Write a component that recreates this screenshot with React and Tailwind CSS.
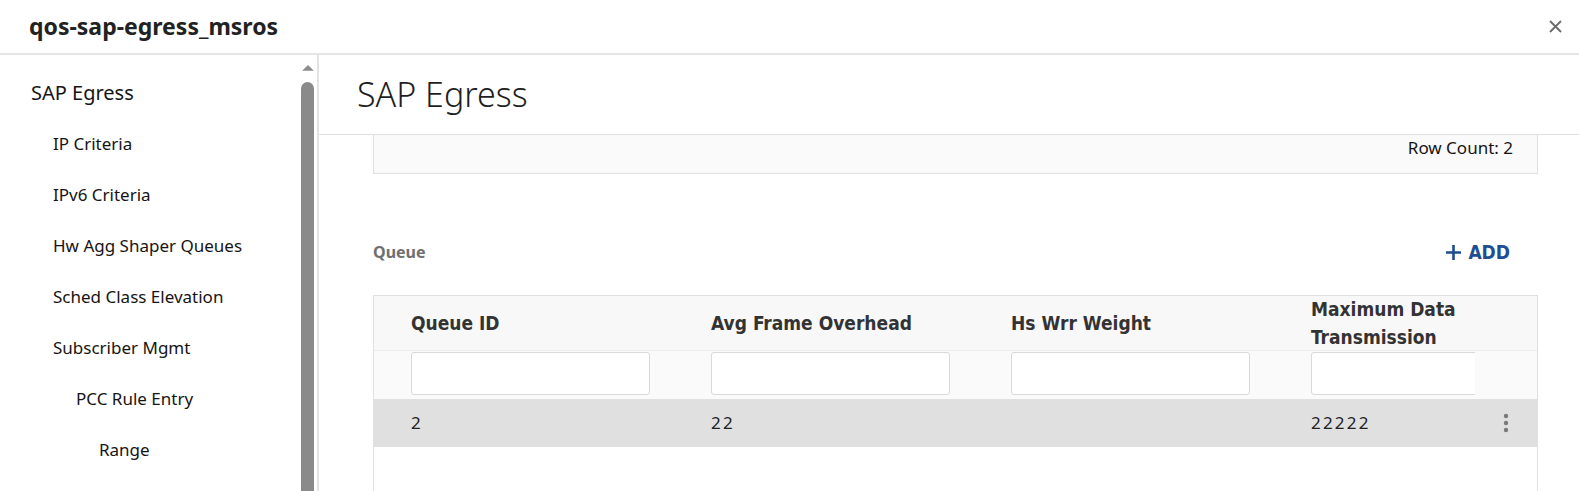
import React from 'react';

const NAV = [
  { label: 'IP Criteria', indent: 'pl-[53px]' },
  { label: 'IPv6 Criteria', indent: 'pl-[53px]' },
  { label: 'Hw Agg Shaper Queues', indent: 'pl-[53px]' },
  { label: 'Sched Class Elevation', indent: 'pl-[53px]' },
  { label: 'Subscriber Mgmt', indent: 'pl-[53px]' },
  { label: 'PCC Rule Entry', indent: 'pl-[76px]' },
  { label: 'Range', indent: 'pl-[99px]' },
];

const COLUMNS = ['Queue ID', 'Avg Frame Overhead', 'Hs Wrr Weight', 'Maximum Data Transmission'];
const ROW = ['2', '22', '', '22222'];

function Kebab() {
  return (
    <svg width="6" height="20" viewBox="0 0 6 20">
      <circle cx="3" cy="3" r="2.2" fill="#7a7a7a" />
      <circle cx="3" cy="10" r="2.2" fill="#7a7a7a" />
      <circle cx="3" cy="17" r="2.2" fill="#7a7a7a" />
    </svg>
  );
}

export default function App() {
  const sans = { fontFamily: '"Noto Sans", "Open Sans", sans-serif' };
  const narrow = { fontFamily: '"Liberation Sans Narrow", "DejaVu Sans Condensed", sans-serif' };

  return (
    <div className="h-[491px] w-full overflow-hidden bg-white text-[#161513]" style={sans}>
      <div className="flex h-[55px] items-center justify-between border-b-2 border-[#e5e5e5] pl-[29px] pr-[17px]">
        <h1 className="text-[23px] font-bold text-[#222]">qos-sap-egress_msros</h1>
        <svg width="13" height="13" viewBox="0 0 13 13">
          <path d="M1 1L12 12M12 1L1 12" stroke="#6b6b6b" strokeWidth="1.8" />
        </svg>
      </div>

      <div className="flex h-[436px]">
        <nav className="w-[296px] shrink-0 pt-[24px]">
          <div className="flex h-[28px] items-center pl-[31px] text-[20px]">SAP Egress</div>
          <ul className="mt-[23px] flex flex-col gap-[23px]">
            {NAV.map((item) => (
              <li key={item.label} className={`flex h-[28px] items-center text-[17px] ${item.indent}`}>
                {item.label}
              </li>
            ))}
          </ul>
        </nav>

        <div className="flex w-[23px] shrink-0 flex-col items-start border-r-2 border-[#e3e3e3] pl-[5px] pt-[9px]">
          <svg width="14" height="8" viewBox="0 0 14 8">
            <path d="M7 1L13 7H1Z" fill="#8c8c8c" />
          </svg>
          <div className="mt-[10px] h-[420px] w-[13px] rounded-t-full bg-[#8a8a8a]" />
        </div>

        <main className="min-w-0 flex-1">
          <div className="flex h-[80px] items-center border-b border-[#e0e0e0] pl-[38px]">
            <h2 className="text-[34px] font-light text-[#1f1f1f]">SAP Egress</h2>
          </div>

          <div className="ml-[54px] mr-[41px]">
            <div className="flex h-[39px] items-start justify-end border-x border-b border-[#e0e0e0] bg-[#fafafa] pr-[24px] pt-[0px] text-[17px]">
              Row Count: 2
            </div>

            <div className="mt-[64px] flex items-center justify-between pr-[28px]">
              <span className="text-[16px] font-bold text-[#6f6f6f]">Queue</span>
              <button className="flex items-center gap-[7px] text-[19px] font-bold text-[#1e4d91]" style={narrow}>
                <svg width="15" height="15" viewBox="0 0 15 15">
                  <path d="M7.5 0V15M0 7.5H15" stroke="#1e4d91" strokeWidth="2.6" />
                </svg>
                ADD
              </button>
            </div>

            <div className="mt-[28px] h-[200px] border border-[#e0e0e0]">
              <div className="flex h-[54px] bg-[#f8f8f8]">
                <div className="flex flex-1 overflow-hidden pl-[37px]">
                  {COLUMNS.map((c) => (
                    <div
                      key={c}
                      className="flex w-[300px] shrink-0 items-center pr-[90px] text-[19px] font-bold leading-[28px] text-[#333]"
                      style={narrow}
                    >
                      {c}
                    </div>
                  ))}
                </div>
                <div className="w-[62px] shrink-0" />
              </div>

              <div className="flex h-[49px] border-t border-[#ececec] bg-[#fafafa]">
                <div className="flex flex-1 items-center overflow-hidden pl-[37px]">
                  {COLUMNS.map((c) => (
                    <div key={c} className="w-[300px] shrink-0">
                      <input
                        className="-mt-[3px] h-[43px] w-[239px] rounded-[3px] border border-[#d9d9d9] bg-white"
                        aria-label={c}
                      />
                    </div>
                  ))}
                </div>
                <div className="w-[62px] shrink-0" />
              </div>

              <div className="flex h-[48px] bg-[#e0e0e0]">
                <div className="flex flex-1 items-center overflow-hidden pl-[37px]">
                  {ROW.map((v, i) => (
                    <div key={i} className="w-[300px] shrink-0 text-[17px] tracking-[2.2px] text-[#222]">
                      {v}
                    </div>
                  ))}
                </div>
                <div className="flex w-[62px] shrink-0 items-center justify-center">
                  <Kebab />
                </div>
              </div>
            </div>
          </div>
        </main>
      </div>
    </div>
  );
}
